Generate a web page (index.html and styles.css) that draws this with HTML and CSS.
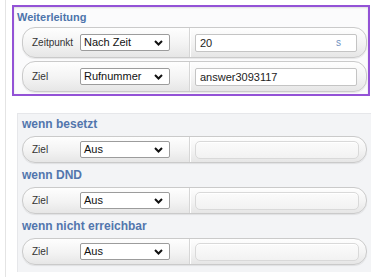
FILE: index.html
```html
<!DOCTYPE html>
<html>
<head>
<meta name="viewport" content="width=device-width, initial-scale=1.0">
<link rel="stylesheet" href="styles.css">
</head>
<body>

<div class="page">

  <div class="group highlight">
    <div class="title">Weiterleitung</div>

    <div class="row">
      <div class="left">
        <span class="label">Zeitpunkt</span>
        <div class="select">Nach Zeit
          <svg class="chev" width="9" height="6" viewBox="0 0 9 6"><path d="M1 1l3.5 3.5L8 1" fill="none" stroke="#111" stroke-width="2"/></svg>
        </div>
      </div>
      <div class="right">
        <div class="field">20<span class="unit">s</span></div>
      </div>
    </div>

    <div class="row">
      <div class="left">
        <span class="label">Ziel</span>
        <div class="select">Rufnummer
          <svg class="chev" width="9" height="6" viewBox="0 0 9 6"><path d="M1 1l3.5 3.5L8 1" fill="none" stroke="#111" stroke-width="2"/></svg>
        </div>
      </div>
      <div class="right">
        <div class="field">answer3093117</div>
      </div>
    </div>
  </div>

  <div class="group panel">
    <div class="heading">wenn besetzt</div>
    <div class="row small">
      <div class="left">
        <span class="label">Ziel</span>
        <div class="select">Aus
          <svg class="chev" width="9" height="6" viewBox="0 0 9 6"><path d="M1 1l3.5 3.5L8 1" fill="none" stroke="#111" stroke-width="2"/></svg>
        </div>
      </div>
      <div class="right">
        <div class="field off"></div>
      </div>
    </div>

    <div class="heading">wenn DND</div>
    <div class="row small">
      <div class="left">
        <span class="label">Ziel</span>
        <div class="select">Aus
          <svg class="chev" width="9" height="6" viewBox="0 0 9 6"><path d="M1 1l3.5 3.5L8 1" fill="none" stroke="#111" stroke-width="2"/></svg>
        </div>
      </div>
      <div class="right">
        <div class="field off"></div>
      </div>
    </div>

    <div class="heading">wenn nicht erreichbar</div>
    <div class="row small">
      <div class="left">
        <span class="label">Ziel</span>
        <div class="select">Aus
          <svg class="chev" width="9" height="6" viewBox="0 0 9 6"><path d="M1 1l3.5 3.5L8 1" fill="none" stroke="#111" stroke-width="2"/></svg>
        </div>
      </div>
      <div class="right">
        <div class="field off"></div>
      </div>
    </div>
  </div>

</div>

</body>
</html>
```

FILE: styles.css
```css
body {
  margin: 0;
  font-family: "Liberation Sans", Arial, sans-serif;
  background: #fff;
  color: #333;
}

.page {
  margin-left: 5px;
  border-left: 1px solid #e4e4e4;
  padding: 5px 0 0 6px;
  min-height: 272px;
}

.highlight {
  margin-right: 1px;
  border: 2px solid #9352d6;
  background: #fbfbfc;
  box-shadow: inset 0 1px 2px rgba(0,0,0,0.12);
  padding: 4px 1px 2px 3px;
}

.title {
  font-size: 11px;
  font-weight: bold;
  line-height: 12px;
  color: #4d74ab;
  margin-bottom: 4px;
}

.highlight .row {
  margin-left: 5px;
}

.highlight .row + .row {
  margin-top: 3px;
}

.panel {
  margin-top: 17px;
  margin-left: 5px;
  background: #f3f4f6;
  border-top: 1px solid #e6e7ea;
  border-left: 1px solid #e6e7ea;
  padding: 4px 4px 7px 4px;
}

.heading {
  font-size: 12px;
  font-weight: bold;
  line-height: 12px;
  color: #5276ad;
  margin-bottom: 6px;
}

.row + .heading {
  margin-top: 6px;
}

.row {
  display: flex;
  height: 31px;
  box-sizing: border-box;
  border: 1px solid #cacaca;
  border-radius: 13px;
  background: linear-gradient(#fefefe, #f3f3f3 55%, #e6e6e6);
  box-shadow: 0 1px 1px rgba(0,0,0,0.08);
}

.row.small {
  height: 27px;
}

.left {
  display: flex;
  align-items: center;
  width: 157px;
  padding-left: 9px;
  border-right: 1px solid #d6d6d6;
  box-shadow: 1px 0 0 #fff;
}

.label {
  width: 48px;
  font-size: 10px;
  color: #333;
}

.select {
  position: relative;
  width: 90px;
  height: 17px;
  box-sizing: border-box;
  border: 1px solid #9c9c9c;
  border-radius: 2px;
  background: #fff;
  font-size: 11px;
  line-height: 14px;
  padding-left: 3px;
  color: #111;
}

.chev {
  position: absolute;
  right: 6px;
  top: 5px;
}

.right {
  flex: 1;
  display: flex;
  align-items: center;
  padding: 0 9px 0 5px;
}

.field {
  flex: 1;
  display: flex;
  justify-content: space-between;
  height: 18px;
  box-sizing: border-box;
  border: 1px solid #c4c4c4;
  border-radius: 2px;
  background: #fff;
  font-size: 11px;
  line-height: 16px;
  padding: 0 15px 0 4px;
  color: #222;
}

.unit {
  color: #7090c0;
  font-size: 10px;
}

.small .right {
  padding-right: 7px;
}

.field.off {
  border-color: #d9d9d9;
  border-radius: 5px;
  background: linear-gradient(#fbfbfb, #f2f2f2);
  box-shadow: inset 0 1px 0 #fff;
}
```
